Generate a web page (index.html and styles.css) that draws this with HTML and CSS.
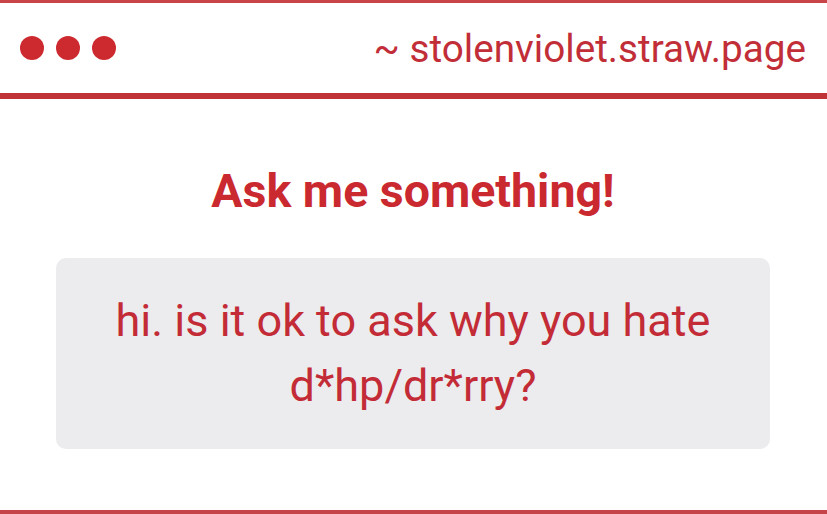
FILE: index.html
```html
<!DOCTYPE html>
<html lang="en">
<head>
<meta charset="utf-8">
<title>Ask me something!</title>
<link rel="stylesheet" href="styles.css">
</head>
<body>
<div class="frame">
  <header class="bar">
    <div class="dots">
      <span class="dot"></span>
      <span class="dot"></span>
      <span class="dot"></span>
    </div>
    <div class="url">~ stolenviolet.straw.page</div>
  </header>
  <main class="content">
    <h1 class="title">Ask me something!</h1>
    <div class="question">hi. is it ok to ask why you hate d*hp/dr*rry?</div>
  </main>
</div>
</body>
</html>
```

FILE: styles.css
```css
* { box-sizing: border-box; }
html, body {
  margin: 0;
  padding: 0;
  background: #ffffff;
}
body {
  font-family: Roboto, "Liberation Sans", sans-serif;
  color: #c52b36;
}
.frame {
  height: 100vh;
  display: flex;
  flex-direction: column;
  border-top: 3px solid #c94449;
  border-bottom: 4px solid #c4444a;
}
.bar {
  height: 96px;
  display: flex;
  align-items: center;
  justify-content: space-between;
  padding: 0 21px 0 20px;
  border-bottom: 6px solid #bf3237;
}
.dots {
  display: flex;
  gap: 12px;
}
.dot {
  width: 24px;
  height: 24px;
  border-radius: 50%;
  background: #cd2a30;
}
.url {
  font-size: 38.7px;
  line-height: 46px;
  color: #c22e38;
  padding-top: 2px;
}
.content {
  flex: 1;
  display: flex;
  flex-direction: column;
  align-items: center;
  padding: 64px 57px 0 56px;
}
.title {
  margin: 0;
  font-size: 46.5px;
  line-height: 56px;
  font-weight: 700;
  color: #c9292f;
}
.question {
  margin-top: 39px;
  width: 100%;
  background: #ecebed;
  border-radius: 10px;
  padding: 30px 30px 31px;
  text-align: center;
  font-size: 45px;
  line-height: 65px;
  color: #c32b36;
}
```
